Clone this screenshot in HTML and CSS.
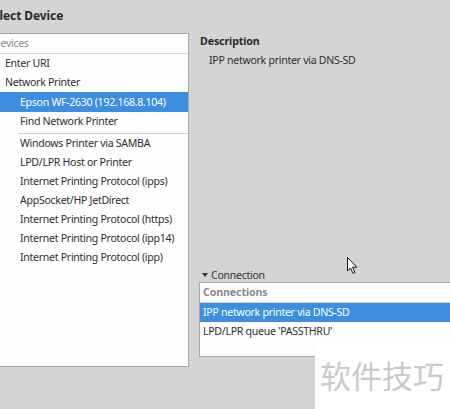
FILE: index.html
```html
<!DOCTYPE html>
<html>
<head>
<meta charset="utf-8">
<link rel="stylesheet" href="styles.css">
</head>
<body>
<div class="title">Select Device</div>
<div class="main">
  <div class="devices">
    <div class="list-header">Devices</div>
    <div class="row lvl0">Enter URI</div>
    <div class="row lvl0">Network Printer</div>
    <div class="row lvl1 selected">Epson WF-2630 (192.168.8.104)</div>
    <div class="row lvl1">Find Network Printer</div>
    <div class="sep"></div>
    <div class="row lvl1">Windows Printer via SAMBA</div>
    <div class="row lvl1">LPD/LPR Host or Printer</div>
    <div class="row lvl1">Internet Printing Protocol (ipps)</div>
    <div class="row lvl1">AppSocket/HP JetDirect</div>
    <div class="row lvl1">Internet Printing Protocol (https)</div>
    <div class="row lvl1">Internet Printing Protocol (ipp14)</div>
    <div class="row lvl1">Internet Printing Protocol (ipp)</div>
  </div>
  <div class="side">
    <div class="desc-title">Description</div>
    <div class="desc-text">IPP network printer via DNS-SD</div>
    <div class="expander"><span class="arrow"></span>Connection</div>
    <div class="conn-box">
      <div class="conn-header">Connections</div>
      <div class="conn-row selected">IPP network printer via DNS-SD</div>
      <div class="conn-row">LPD/LPR queue 'PASSTHRU'</div>
    </div>
  </div>
</div>
<svg class="cursor" width="13" height="19" viewBox="0 0 13 19">
  <path d="M1.5 1.5 L1.5 15 L4.5 12 L7 17.5 L9 16.6 L6.6 11.2 L10.8 11.2 Z" fill="#fff" stroke="#111" stroke-width="1" stroke-linejoin="miter"/>
</svg>
<div class="watermark">软件技巧</div>
</body>
</html>
```
FILE: styles.css
```css
html, body {
  margin: 0;
  padding: 0;
}
body {
  width: 450px;
  height: 409px;
  overflow: hidden;
  position: relative;
  background: #d4d4d4;
  font-family: "Noto Sans", "Open Sans", sans-serif;
  font-size: 10.6px;
  letter-spacing: -0.3px;
  color: #2f2f2f;
}
.title {
  height: 33px;
  box-sizing: border-box;
  padding-top: 6px;
  line-height: 20px;
  margin-left: -14px;
  font-size: 12px;
  font-weight: bold;
  letter-spacing: -0.1px;
  color: #2a2a2a;
}
.main {
  display: flex;
  gap: 10px;
  margin-left: -10px;
  width: 490px;
}
.devices {
  width: 199px;
  height: 334px;
  box-sizing: border-box;
  border: 1px solid #a7a7a7;
  background: #fdfdfd;
  flex: none;
}
.list-header {
  height: 20px;
  line-height: 19px;
  box-sizing: border-box;
  border-bottom: 1px solid #d6d6d6;
  padding-left: 2px;
  color: #8a8a8a;
}
.row {
  height: 19px;
  line-height: 19px;
  white-space: nowrap;
}
.lvl0 { padding-left: 14px; }
.lvl1 { padding-left: 29px; }
.selected {
  background: #3c8ee0;
  color: #ffffff;
}
.row.selected {
  height: 20px;
  line-height: 20px;
}
.sep {
  height: 3px;
  margin-left: 27px;
  box-sizing: border-box;
  border-bottom: 1px solid #d0d0d0;
}
.side {
  flex: 1;
  height: 324px;
  display: flex;
  flex-direction: column;
}
.desc-title {
  font-weight: bold;
  line-height: 16px;
  padding-left: 1px;
  letter-spacing: -0.1px;
  color: #2a2a2a;
}
.desc-text {
  margin-top: 3px;
  line-height: 16px;
  padding-left: 10px;
}
.expander {
  margin-top: auto;
  line-height: 14px;
  height: 14px;
  padding-left: 3px;
  color: #333;
  display: flex;
  align-items: center;
}
.arrow {
  width: 0;
  height: 0;
  border-left: 3px solid transparent;
  border-right: 3px solid transparent;
  border-top: 4px solid #333;
  margin-right: 3px;
}
.conn-box {
  height: 75px;
  box-sizing: border-box;
  border: 1px solid #a7a7a7;
  background: #fdfdfd;
}
.conn-header {
  height: 20px;
  line-height: 19px;
  box-sizing: border-box;
  border-bottom: 1px solid #d6d6d6;
  padding-left: 3px;
  color: #8a8a8a;
  font-weight: bold;
  letter-spacing: -0.1px;
}
.conn-row {
  height: 19px;
  line-height: 19px;
  padding-left: 3px;
  white-space: nowrap;
}
.cursor {
  position: absolute;
  left: 346px;
  top: 256px;
}
.watermark {
  position: absolute;
  left: 315px;
  top: 342px;
  width: 135px;
  height: 67px;
  background: #ffffff;
  color: #cacaca;
  font-family: "Noto Sans CJK SC", sans-serif;
  font-size: 31px;
  line-height: 31px;
  padding-left: 5px;
  padding-top: 17px;
  box-sizing: border-box;
  white-space: nowrap;
  letter-spacing: 0;
}
```
